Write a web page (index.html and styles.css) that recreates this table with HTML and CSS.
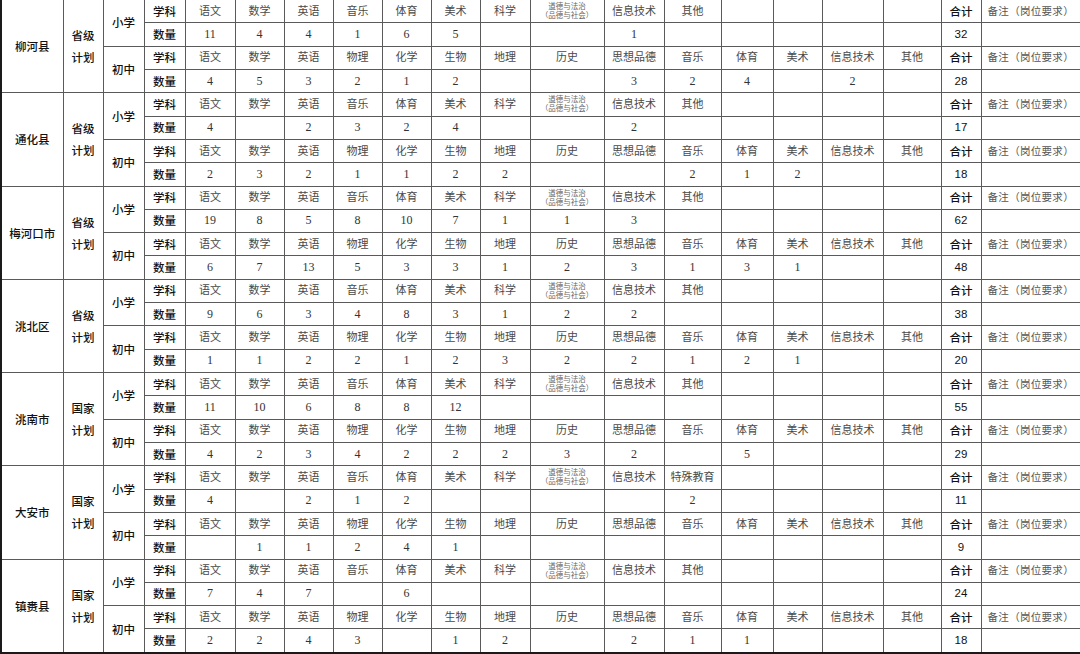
FILE: index.html
```html
<!DOCTYPE html>
<html lang="zh">
<head>
<meta charset="utf-8">
<title>招聘计划</title>
<link rel="stylesheet" href="styles.css">
</head>
<body>
<table class="plan">
<colgroup>
<col style="width:62px"><col style="width:40px"><col style="width:41px"><col style="width:41px">
<col style="width:50px"><col style="width:49px"><col style="width:49px"><col style="width:49px"><col style="width:49px"><col style="width:49px"><col style="width:50px">
<col style="width:74px"><col style="width:60px"><col style="width:57px"><col style="width:52px"><col style="width:49px"><col style="width:61px"><col style="width:58px">
<col style="width:40px"><col style="width:100px">
</colgroup>
<tbody>
<!-- 柳河县 -->
<tr class="first">
<td rowspan="4" class="lbl county">柳河县</td><td rowspan="4" class="lbl plantype">省级<br>计划</td>
<td rowspan="2" class="lbl">小学</td><td class="lbl">学科</td>
<td>语文</td><td>数学</td><td>英语</td><td>音乐</td><td>体育</td><td>美术</td><td>科学</td><td class="small">道德与法治<br>（品德与社会）</td><td>信息技术</td><td>其他</td><td></td><td></td><td></td><td></td><td class="lbl">合计</td><td class="note">备注（岗位要求）</td>
</tr>
<tr><td class="lbl">数量</td><td class="n">11</td><td class="n">4</td><td class="n">4</td><td class="n">1</td><td class="n">6</td><td class="n">5</td><td></td><td></td><td class="n">1</td><td></td><td></td><td></td><td></td><td></td><td class="tot">32</td><td></td></tr>
<tr><td rowspan="2" class="lbl">初中</td><td class="lbl">学科</td><td>语文</td><td>数学</td><td>英语</td><td>物理</td><td>化学</td><td>生物</td><td>地理</td><td>历史</td><td>思想品德</td><td>音乐</td><td>体育</td><td>美术</td><td>信息技术</td><td>其他</td><td class="lbl">合计</td><td class="note">备注（岗位要求）</td></tr>
<tr><td class="lbl">数量</td><td class="n">4</td><td class="n">5</td><td class="n">3</td><td class="n">2</td><td class="n">1</td><td class="n">2</td><td></td><td></td><td class="n">3</td><td class="n">2</td><td class="n">4</td><td></td><td class="n">2</td><td></td><td class="tot">28</td><td></td></tr>
<!-- 通化县 -->
<tr class="blk">
<td rowspan="4" class="lbl county">通化县</td><td rowspan="4" class="lbl plantype">省级<br>计划</td>
<td rowspan="2" class="lbl">小学</td><td class="lbl">学科</td>
<td>语文</td><td>数学</td><td>英语</td><td>音乐</td><td>体育</td><td>美术</td><td>科学</td><td class="small">道德与法治<br>（品德与社会）</td><td>信息技术</td><td>其他</td><td></td><td></td><td></td><td></td><td class="lbl">合计</td><td class="note">备注（岗位要求）</td>
</tr>
<tr><td class="lbl">数量</td><td class="n">4</td><td></td><td class="n">2</td><td class="n">3</td><td class="n">2</td><td class="n">4</td><td></td><td></td><td class="n">2</td><td></td><td></td><td></td><td></td><td></td><td class="tot">17</td><td></td></tr>
<tr><td rowspan="2" class="lbl">初中</td><td class="lbl">学科</td><td>语文</td><td>数学</td><td>英语</td><td>物理</td><td>化学</td><td>生物</td><td>地理</td><td>历史</td><td>思想品德</td><td>音乐</td><td>体育</td><td>美术</td><td>信息技术</td><td>其他</td><td class="lbl">合计</td><td class="note">备注（岗位要求）</td></tr>
<tr><td class="lbl">数量</td><td class="n">2</td><td class="n">3</td><td class="n">2</td><td class="n">1</td><td class="n">1</td><td class="n">2</td><td class="n">2</td><td></td><td></td><td class="n">2</td><td class="n">1</td><td class="n">2</td><td></td><td></td><td class="tot">18</td><td></td></tr>
<!-- 梅河口市 -->
<tr class="blk">
<td rowspan="4" class="lbl county">梅河口市</td><td rowspan="4" class="lbl plantype">省级<br>计划</td>
<td rowspan="2" class="lbl">小学</td><td class="lbl">学科</td>
<td>语文</td><td>数学</td><td>英语</td><td>音乐</td><td>体育</td><td>美术</td><td>科学</td><td class="small">道德与法治<br>（品德与社会）</td><td>信息技术</td><td>其他</td><td></td><td></td><td></td><td></td><td class="lbl">合计</td><td class="note">备注（岗位要求）</td>
</tr>
<tr><td class="lbl">数量</td><td class="n">19</td><td class="n">8</td><td class="n">5</td><td class="n">8</td><td class="n">10</td><td class="n">7</td><td class="n">1</td><td class="n">1</td><td class="n">3</td><td></td><td></td><td></td><td></td><td></td><td class="tot">62</td><td></td></tr>
<tr><td rowspan="2" class="lbl">初中</td><td class="lbl">学科</td><td>语文</td><td>数学</td><td>英语</td><td>物理</td><td>化学</td><td>生物</td><td>地理</td><td>历史</td><td>思想品德</td><td>音乐</td><td>体育</td><td>美术</td><td>信息技术</td><td>其他</td><td class="lbl">合计</td><td class="note">备注（岗位要求）</td></tr>
<tr><td class="lbl">数量</td><td class="n">6</td><td class="n">7</td><td class="n">13</td><td class="n">5</td><td class="n">3</td><td class="n">3</td><td class="n">1</td><td class="n">2</td><td class="n">3</td><td class="n">1</td><td class="n">3</td><td class="n">1</td><td></td><td></td><td class="tot">48</td><td></td></tr>
<!-- 洮北区 -->
<tr class="blk">
<td rowspan="4" class="lbl county">洮北区</td><td rowspan="4" class="lbl plantype">省级<br>计划</td>
<td rowspan="2" class="lbl">小学</td><td class="lbl">学科</td>
<td>语文</td><td>数学</td><td>英语</td><td>音乐</td><td>体育</td><td>美术</td><td>科学</td><td class="small">道德与法治<br>（品德与社会）</td><td>信息技术</td><td>其他</td><td></td><td></td><td></td><td></td><td class="lbl">合计</td><td class="note">备注（岗位要求）</td>
</tr>
<tr><td class="lbl">数量</td><td class="n">9</td><td class="n">6</td><td class="n">3</td><td class="n">4</td><td class="n">8</td><td class="n">3</td><td class="n">1</td><td class="n">2</td><td class="n">2</td><td></td><td></td><td></td><td></td><td></td><td class="tot">38</td><td></td></tr>
<tr><td rowspan="2" class="lbl">初中</td><td class="lbl">学科</td><td>语文</td><td>数学</td><td>英语</td><td>物理</td><td>化学</td><td>生物</td><td>地理</td><td>历史</td><td>思想品德</td><td>音乐</td><td>体育</td><td>美术</td><td>信息技术</td><td>其他</td><td class="lbl">合计</td><td class="note">备注（岗位要求）</td></tr>
<tr><td class="lbl">数量</td><td class="n">1</td><td class="n">1</td><td class="n">2</td><td class="n">2</td><td class="n">1</td><td class="n">2</td><td class="n">3</td><td class="n">2</td><td class="n">2</td><td class="n">1</td><td class="n">2</td><td class="n">1</td><td></td><td></td><td class="tot">20</td><td></td></tr>
<!-- 洮南市 -->
<tr class="blk">
<td rowspan="4" class="lbl county">洮南市</td><td rowspan="4" class="lbl plantype">国家<br>计划</td>
<td rowspan="2" class="lbl">小学</td><td class="lbl">学科</td>
<td>语文</td><td>数学</td><td>英语</td><td>音乐</td><td>体育</td><td>美术</td><td>科学</td><td class="small">道德与法治<br>（品德与社会）</td><td>信息技术</td><td>其他</td><td></td><td></td><td></td><td></td><td class="lbl">合计</td><td class="note">备注（岗位要求）</td>
</tr>
<tr><td class="lbl">数量</td><td class="n">11</td><td class="n">10</td><td class="n">6</td><td class="n">8</td><td class="n">8</td><td class="n">12</td><td></td><td></td><td></td><td></td><td></td><td></td><td></td><td></td><td class="tot">55</td><td></td></tr>
<tr><td rowspan="2" class="lbl">初中</td><td class="lbl">学科</td><td>语文</td><td>数学</td><td>英语</td><td>物理</td><td>化学</td><td>生物</td><td>地理</td><td>历史</td><td>思想品德</td><td>音乐</td><td>体育</td><td>美术</td><td>信息技术</td><td>其他</td><td class="lbl">合计</td><td class="note">备注（岗位要求）</td></tr>
<tr><td class="lbl">数量</td><td class="n">4</td><td class="n">2</td><td class="n">3</td><td class="n">4</td><td class="n">2</td><td class="n">2</td><td class="n">2</td><td class="n">3</td><td class="n">2</td><td></td><td class="n">5</td><td></td><td></td><td></td><td class="tot">29</td><td></td></tr>
<!-- 大安市 -->
<tr class="blk">
<td rowspan="4" class="lbl county">大安市</td><td rowspan="4" class="lbl plantype">国家<br>计划</td>
<td rowspan="2" class="lbl">小学</td><td class="lbl">学科</td>
<td>语文</td><td>数学</td><td>英语</td><td>音乐</td><td>体育</td><td>美术</td><td>科学</td><td class="small">道德与法治<br>（品德与社会）</td><td>信息技术</td><td>特殊教育</td><td></td><td></td><td></td><td></td><td class="lbl">合计</td><td class="note">备注（岗位要求）</td>
</tr>
<tr><td class="lbl">数量</td><td class="n">4</td><td></td><td class="n">2</td><td class="n">1</td><td class="n">2</td><td></td><td></td><td></td><td></td><td class="n">2</td><td></td><td></td><td></td><td></td><td class="tot">11</td><td></td></tr>
<tr><td rowspan="2" class="lbl">初中</td><td class="lbl">学科</td><td>语文</td><td>数学</td><td>英语</td><td>物理</td><td>化学</td><td>生物</td><td>地理</td><td>历史</td><td>思想品德</td><td>音乐</td><td>体育</td><td>美术</td><td>信息技术</td><td>其他</td><td class="lbl">合计</td><td class="note">备注（岗位要求）</td></tr>
<tr><td class="lbl">数量</td><td></td><td class="n">1</td><td class="n">1</td><td class="n">2</td><td class="n">4</td><td class="n">1</td><td></td><td></td><td></td><td></td><td></td><td></td><td></td><td></td><td class="tot">9</td><td></td></tr>
<!-- 镇赉县 -->
<tr class="blk">
<td rowspan="4" class="lbl county">镇赉县</td><td rowspan="4" class="lbl plantype">国家<br>计划</td>
<td rowspan="2" class="lbl">小学</td><td class="lbl">学科</td>
<td>语文</td><td>数学</td><td>英语</td><td>音乐</td><td>体育</td><td>美术</td><td>科学</td><td class="small">道德与法治<br>（品德与社会）</td><td>信息技术</td><td>其他</td><td></td><td></td><td></td><td></td><td class="lbl">合计</td><td class="note">备注（岗位要求）</td>
</tr>
<tr><td class="lbl">数量</td><td class="n">7</td><td class="n">4</td><td class="n">7</td><td></td><td class="n">6</td><td></td><td></td><td></td><td></td><td></td><td></td><td></td><td></td><td></td><td class="tot">24</td><td></td></tr>
<tr><td rowspan="2" class="lbl">初中</td><td class="lbl">学科</td><td>语文</td><td>数学</td><td>英语</td><td>物理</td><td>化学</td><td>生物</td><td>地理</td><td>历史</td><td>思想品德</td><td>音乐</td><td>体育</td><td>美术</td><td>信息技术</td><td>其他</td><td class="lbl">合计</td><td class="note">备注（岗位要求）</td></tr>
<tr><td class="lbl">数量</td><td class="n">2</td><td class="n">2</td><td class="n">4</td><td class="n">3</td><td></td><td class="n">1</td><td class="n">2</td><td></td><td class="n">2</td><td class="n">1</td><td class="n">1</td><td></td><td></td><td></td><td class="tot">18</td><td></td></tr>
</tbody>
</table>
</body>
</html>
```
FILE: styles.css
```css
html, body {
  margin: 0;
  padding: 0;
  background: #ffffff;
}

.plan {
  width: 1080px;
  height: 654px;
  border-collapse: collapse;
  table-layout: fixed;
  font-family: "Liberation Serif", "Noto Sans CJK SC", serif;
  font-size: 11px;
  color: #4a4a4a;
  border-left: 2px solid #1a1a1a;
  border-right: 2px solid #1a1a1a;
  border-bottom: 2px solid #1a1a1a;
}

.plan td {
  border: 1px solid #5a5a5a;
  text-align: center;
  vertical-align: middle;
  padding: 0;
  height: 22px;
  line-height: 13px;
  white-space: nowrap;
  overflow: hidden;
}

.plan tr.first td {
  border-top: none;
}

.plan tr.blk td {
  border-top: 1px solid #333333;
}

.plan td.lbl {
  font-family: "Noto Sans CJK SC", sans-serif;
  font-weight: 500;
  font-size: 11.5px;
  color: #111111;
}

.plan td.county,
.plan td.plantype {
  line-height: 22px;
}

.plan td.n {
  font-size: 12px;
  color: #333333;
}

.plan td.tot {
  font-family: "Liberation Sans", "Noto Sans CJK SC", sans-serif;
  font-size: 11.5px;
  color: #111111;
}

.plan td.note {
  font-size: 10.5px;
  letter-spacing: 0.3px;
  color: #555555;
}

.plan td.small {
  font-size: 7.5px;
  line-height: 9px;
  color: #666666;
}
```
